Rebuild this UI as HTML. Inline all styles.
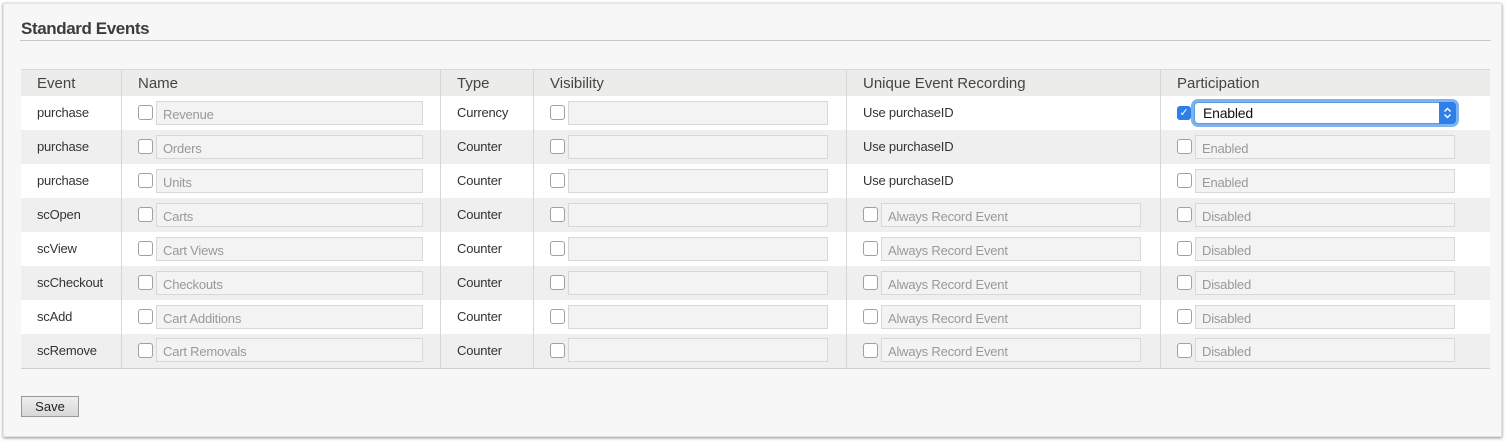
<!DOCTYPE html>
<html><head><style>
body{margin:0;width:1509px;height:444px;background:#fff;font-family:"Liberation Sans",sans-serif;position:relative;overflow:hidden}
.panel{position:absolute;left:3px;top:3px;width:1499px;height:434px;background:#f7f7f7;box-shadow:0 1px 3px rgba(0,0,0,.45);border:1px solid #e2e2e2;box-sizing:border-box}
.title{position:absolute;left:21px;top:19px;font-size:17px;font-weight:bold;color:#3c3c3c;letter-spacing:-0.4px}
.rule{position:absolute;left:20px;top:40px;width:1471px;height:1px;background:#c8c8c8}
table{position:absolute;left:21px;top:69px;border-collapse:collapse;width:1469px;font-size:13px;color:#333}
th{background:#ececea;font-weight:normal;text-align:left;height:26px;padding:0 0 0 16px;font-size:15px;color:#444;border-top:1px solid #d8d8d8}
td{height:34px;padding:0 0 1px 16px;box-sizing:border-box;white-space:nowrap;letter-spacing:-0.2px}
th+th,td+td{border-left:1px solid #d6d6d6}
tr:nth-child(odd) td{background:#efefef}
tr:nth-child(even) td{background:#fff}
tr:last-child td{border-bottom:1px solid #d0d0d0}
.cb{display:inline-block;width:13px;height:13px;border:1px solid #a0a0a0;border-radius:3px;background:#fff;vertical-align:middle;margin-right:3px}
.in{display:inline-block;width:260px;height:24px;border:1px solid #d8d8d8;background:#f3f3f3;vertical-align:middle;box-sizing:border-box;color:#999;padding:5px 0 0 6px;font-size:13px}
.sel{display:inline-block;width:262px;height:22px;border-radius:4px;background:#fff;box-shadow:0 0 0 3px #7fb3ef;border:1px solid #5a9be8;vertical-align:middle;box-sizing:border-box;position:relative;font-size:14px;color:#111;padding:2px 0 0 8px}
.sel svg{position:absolute;right:-1px;top:-1px}
.chk{display:inline-block;width:14px;height:14px;border-radius:3px;background:#2f7fe9;vertical-align:middle;margin-right:3px;color:#fff;font-size:11px;text-align:center;line-height:14px}
.btn{position:absolute;left:21px;top:396px;width:58px;height:21px;border:1px solid #999;background:linear-gradient(#eee,#d8d8d8);font-size:13px;box-sizing:border-box;text-align:center;line-height:20px;color:#222}
</style></head><body>
<div class="panel"></div>
<div class="title">Standard Events</div>
<div class="rule"></div>
<table>
<tr><th style="width:84px">Event</th><th style="width:302px">Name</th><th style="width:76px">Type</th><th style="width:296px">Visibility</th><th style="width:297px">Unique Event Recording</th><th>Participation</th></tr>
<tr><td>purchase</td><td><span class="cb"></span><span class="in" style="width:267px">Revenue</span></td><td>Currency</td><td><span class="cb"></span><span class="in"></span></td><td>Use purchaseID</td><td><span class="chk">✓</span><span class="sel">Enabled<svg width="17" height="22" viewBox="0 0 17 22"><path d="M0 0H13A4 4 0 0 1 17 4V18A4 4 0 0 1 13 22H0Z" fill="#2f7fe9"/><path d="M5.5 9.5L8.5 6.5L11.5 9.5M5.5 12.5L8.5 15.5L11.5 12.5" stroke="#fff" stroke-width="1.4" fill="none"/></svg></span></td></tr>
<tr><td>purchase</td><td><span class="cb"></span><span class="in" style="width:267px">Orders</span></td><td>Counter</td><td><span class="cb"></span><span class="in"></span></td><td>Use purchaseID</td><td><span class="cb"></span><span class="in">Enabled</span></td></tr>
<tr><td>purchase</td><td><span class="cb"></span><span class="in" style="width:267px">Units</span></td><td>Counter</td><td><span class="cb"></span><span class="in"></span></td><td>Use purchaseID</td><td><span class="cb"></span><span class="in">Enabled</span></td></tr>
<tr><td>scOpen</td><td><span class="cb"></span><span class="in" style="width:267px">Carts</span></td><td>Counter</td><td><span class="cb"></span><span class="in"></span></td><td><span class="cb"></span><span class="in">Always Record Event</span></td><td><span class="cb"></span><span class="in">Disabled</span></td></tr>
<tr><td>scView</td><td><span class="cb"></span><span class="in" style="width:267px">Cart Views</span></td><td>Counter</td><td><span class="cb"></span><span class="in"></span></td><td><span class="cb"></span><span class="in">Always Record Event</span></td><td><span class="cb"></span><span class="in">Disabled</span></td></tr>
<tr><td>scCheckout</td><td><span class="cb"></span><span class="in" style="width:267px">Checkouts</span></td><td>Counter</td><td><span class="cb"></span><span class="in"></span></td><td><span class="cb"></span><span class="in">Always Record Event</span></td><td><span class="cb"></span><span class="in">Disabled</span></td></tr>
<tr><td>scAdd</td><td><span class="cb"></span><span class="in" style="width:267px">Cart Additions</span></td><td>Counter</td><td><span class="cb"></span><span class="in"></span></td><td><span class="cb"></span><span class="in">Always Record Event</span></td><td><span class="cb"></span><span class="in">Disabled</span></td></tr>
<tr><td>scRemove</td><td><span class="cb"></span><span class="in" style="width:267px">Cart Removals</span></td><td>Counter</td><td><span class="cb"></span><span class="in"></span></td><td><span class="cb"></span><span class="in">Always Record Event</span></td><td><span class="cb"></span><span class="in">Disabled</span></td></tr>
</table>
<div class="btn">Save</div>
</body></html>
